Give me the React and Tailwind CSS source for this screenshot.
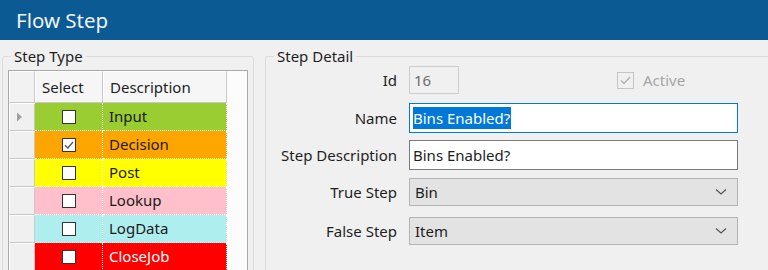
const rows = [
  { name: "Input", bg: "bg-[#9acd32]", text: "text-[#1a1a1a]", checked: false, current: true },
  { name: "Decision", bg: "bg-[#ffa500]", text: "text-[#1a1a1a]", checked: true },
  { name: "Post", bg: "bg-[#ffff00]", text: "text-[#1a1a1a]", checked: false },
  { name: "Lookup", bg: "bg-[#ffc0cb]", text: "text-[#1a1a1a]", checked: false },
  { name: "LogData", bg: "bg-[#afeeee]", text: "text-[#1a1a1a]", checked: false },
  { name: "CloseJob", bg: "bg-[#ff0000]", text: "text-white", checked: false },
];

function CheckBox({ checked }) {
  return (
    <div className="w-[14px] h-[14px] bg-white border border-[#333333] flex items-center justify-center">
      {checked && (
        <svg width="12" height="12" viewBox="0 0 12 12">
          <path d="M2 6.2 L4.8 9 L10 3" fill="none" stroke="#555" strokeWidth="1.3" />
        </svg>
      )}
    </div>
  );
}

function Chevron() {
  return (
    <svg width="12" height="8" viewBox="0 0 12 8">
      <path d="M1 1.5 L6 6 L11 1.5" fill="none" stroke="#555" strokeWidth="1.2" />
    </svg>
  );
}

function FieldRow({ label, children, className = "" }) {
  return (
    <div className={"flex items-center " + className}>
      <div className="w-[143px] text-right pr-[12px] text-[#1e1e1e] whitespace-nowrap">{label}</div>
      {children}
    </div>
  );
}

export default function App() {
  return (
    <div className="w-[768px] h-[270px] overflow-hidden bg-[#f0f0f0] font-['Noto_Sans',sans-serif] text-[15px]">
      <div className="h-10 bg-[#0c5a94] text-[#eef3f8] text-[20.5px] leading-[40px] pl-[16px]">Flow Step</div>
      <div className="flex pl-[2px] pt-[8px] gap-[11px]">
        <fieldset className="w-[252px] h-[240px] border border-[#dcdcdc] rounded-[3px] pl-[5px] pr-[5px]">
          <legend className="ml-[3px] px-[3px] leading-[17px] text-[#1e1e1e]">Step Type</legend>
          <div className="mt-[5px] border border-[#a8a8a8] bg-[#fcfcfc] h-[210px] overflow-hidden">
            <div className="grid grid-cols-[26px_68px_124px_1fr] h-[32px]">
              <div className="bg-[#f2f2f2] border-t border-l border-white border-r border-b border-r-[#c8c8c8] border-b-[#c8c8c8]" />
              <div className="bg-[#f6f6f6] border-t border-l border-white border-r border-b border-r-[#c8c8c8] border-b-[#c8c8c8] pl-[6px] flex items-center text-[#1e1e1e]">Select</div>
              <div className="bg-[#f6f6f6] border-t border-l border-white border-r border-b border-r-[#c8c8c8] border-b-[#c8c8c8] pl-[6px] flex items-center text-[#1e1e1e]">Description</div>
              <div />
            </div>
            {rows.map((r) => (
              <div key={r.name} className="grid grid-cols-[26px_68px_124px_1fr] h-[28px]">
                <div className="bg-[#f0f0f0] border-t border-l border-white border-r border-b border-r-[#c8c8c8] border-b-[#c8c8c8] flex items-center pl-[6px]">
                  {r.current && (
                    <svg width="7" height="10" viewBox="0 0 7 10">
                      <path d="M1 0.5 L6 5 L1 9.5 Z" fill="#a0a0a0" />
                    </svg>
                  )}
                </div>
                <div className={r.bg + " border-r border-b border-dotted border-white flex items-center justify-center"}>
                  <CheckBox checked={r.checked} />
                </div>
                <div className={r.bg + " " + r.text + " border-r border-b border-dotted border-white flex items-center pl-[6px]"}>
                  {r.name}
                </div>
                <div />
              </div>
            ))}
          </div>
        </fieldset>
        <fieldset className="flex-1 h-[240px] border border-r-0 border-[#dcdcdc] rounded-l-[3px] pt-[1px]">
          <legend className="ml-[8px] px-[3px] leading-[17px] text-[#1e1e1e]">Step Detail</legend>
          <FieldRow label="Id" className="h-[28px]">
            <div className="w-[50px] h-[28px] border border-[#cccccc] bg-[#f0f0f0] text-[#6d6d6d] pl-[4px] flex items-center">16</div>
            <div className="ml-[158px] flex items-center gap-[9px] text-[#a6a6a6]">
              <div className="w-[17px] h-[17px] border border-[#c4c4c4] bg-[#f0f0f0] flex items-center justify-center">
                <svg width="13" height="13" viewBox="0 0 13 13">
                  <path d="M2 6.5 L5 9.5 L11 3" fill="none" stroke="#b0b0b0" strokeWidth="1.4" />
                </svg>
              </div>
              <span>Active</span>
            </div>
          </FieldRow>
          <FieldRow label="Name" className="h-[30px] mt-[9px]">
            <div className="w-[329px] h-[30px] border border-[#0078d7] bg-white pl-[3px] flex items-center">
              <span className="bg-[#0078d7] text-white leading-[22px] pr-[1px]">Bins Enabled?</span>
            </div>
          </FieldRow>
          <FieldRow label="Step Description" className="h-[30px] mt-[7px]">
            <div className="w-[329px] h-[30px] border border-[#7a7a7a] bg-white pl-[3px] flex items-center text-[#1e1e1e]">Bins Enabled?</div>
          </FieldRow>
          <FieldRow label="True Step" className="h-[28px] mt-[8px]">
            <div className="w-[329px] h-[28px] border border-[#b4b4b4] bg-[#e3e3e3] pl-[5px] pr-[10px] flex items-center justify-between text-[#1e1e1e]">
              <span>Bin</span>
              <Chevron />
            </div>
          </FieldRow>
          <FieldRow label="False Step" className="h-[28px] mt-[11px]">
            <div className="w-[329px] h-[28px] border border-[#b4b4b4] bg-[#e3e3e3] pl-[5px] pr-[10px] flex items-center justify-between text-[#1e1e1e]">
              <span>Item</span>
              <Chevron />
            </div>
          </FieldRow>
        </fieldset>
      </div>
    </div>
  );
}
